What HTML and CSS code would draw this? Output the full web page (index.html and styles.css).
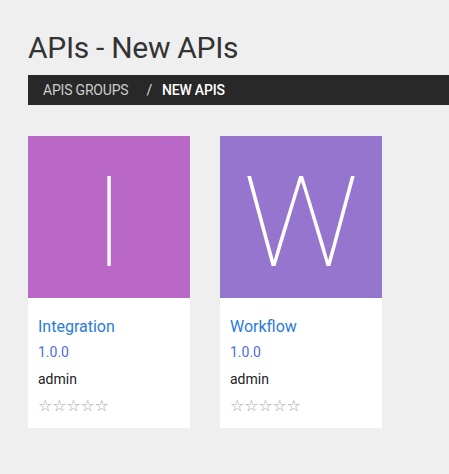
FILE: index.html
```html
<!DOCTYPE html>
<html>
<head>
<meta charset="utf-8">
<link rel="stylesheet" href="styles.css">
</head>
<body>
<div class="page">
  <h1 class="title">APIs - New APIs</h1>
  <div class="crumbs">
    <span class="crumb">APIS GROUPS</span>
    <span class="sep">/</span>
    <span class="crumb current">NEW APIS</span>
  </div>
  <div class="cards">
    <div class="card">
      <div class="thumb purple"><span class="letter">I</span></div>
      <div class="body">
        <div class="name">Integration</div>
        <div class="ver">1.0.0</div>
        <div class="owner">admin</div>
        <div class="stars">☆☆☆☆☆</div>
      </div>
    </div>
    <div class="card">
      <div class="thumb violet"><span class="letter">W</span></div>
      <div class="body">
        <div class="name">Workflow</div>
        <div class="ver">1.0.0</div>
        <div class="owner">admin</div>
        <div class="stars">☆☆☆☆☆</div>
      </div>
    </div>
  </div>
</div>
</body>
</html>
```

FILE: styles.css
```css
html, body {
  margin: 0;
  padding: 0;
  background: #efefef;
  font-family: Roboto, "Liberation Sans", sans-serif;
}
.page {
  padding: 29px 0 0 28px;
}
.title {
  margin: 0;
  font-size: 30px;
  font-weight: 400;
  letter-spacing: -0.3px;
  color: #333;
  line-height: 37px;
}
.crumbs {
  margin-top: 9px;
  height: 30px;
  background: #282828;
  display: flex;
  align-items: center;
  padding-left: 15px;
  font-size: 14px;
  letter-spacing: -0.2px;
}
.crumb {
  color: #ccc;
}
.sep {
  color: #ddd;
  margin: 0 10px 0 18px;
}
.current {
  color: #fff;
  font-weight: 500;
}
.cards {
  display: flex;
  gap: 30px;
  margin-top: 31px;
}
.card {
  width: 162px;
  background: #fff;
}
.thumb {
  height: 162px;
  box-sizing: border-box;
  padding-top: 10px;
  display: flex;
  align-items: center;
  justify-content: center;
}
.purple { background: #ba68c8; }
.violet { background: #9575cd; }
.letter {
  color: #fff;
  font-size: 127px;
  font-weight: 100;
  line-height: 1;
}
.body {
  padding: 18px 10px 12px 10px;
}
.name {
  font-size: 16px;
  color: #2a7ae2;
  line-height: 22px;
}
.ver {
  font-size: 14px;
  color: #4a6fe0;
  margin-top: 5px;
  line-height: 18px;
}
.owner {
  font-size: 14px;
  color: #222;
  margin-top: 9px;
  line-height: 18px;
}
.stars {
  font-family: "DejaVu Sans", sans-serif;
  font-size: 16px;
  color: #a8a8a8;
  margin-top: 8px;
  line-height: 20px;
  letter-spacing: -0.2px;
}
```
